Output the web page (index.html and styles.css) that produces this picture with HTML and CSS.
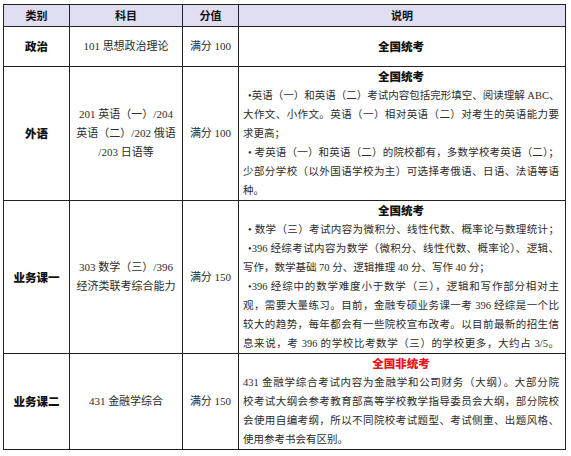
FILE: index.html
```html
<!DOCTYPE html>
<html lang="zh-CN">
<head>
<meta charset="utf-8">
<title>考试科目</title>
<link rel="stylesheet" href="styles.css">
</head>
<body>
<div class="page">
<table class="exam">
  <colgroup>
    <col class="c-cat"><col class="c-subj"><col class="c-score"><col class="c-desc">
  </colgroup>
  <thead>
    <tr><th>类别</th><th>科目</th><th>分值</th><th>说明</th></tr>
  </thead>
  <tbody>
    <tr class="r1">
      <td class="cat">政治</td>
      <td class="mid">101 思想政治理论</td>
      <td class="mid">满分 100</td>
      <td class="desc mid-v"><div class="title">全国统考</div></td>
    </tr>
    <tr>
      <td class="cat">外语</td>
      <td class="mid">201 英语（一）/204<br>英语（二）/202 俄语<br>/203 日语等</td>
      <td class="mid">满分 100</td>
      <td class="desc">
        <div class="title">全国统考</div>
        <span class="ln fl bl">•英语（一）和英语（二）考试内容包括完形填空、阅读理解 ABC、</span>
        <span class="ln fl">大作文、小作文。英语（一）相对英语（二）对考生的英语能力要</span>
        <span class="ln">求更高；</span>
        <span class="ln fl bl">• 考英语（一）和英语（二）的院校都有，多数学校考英语（二）；</span>
        <span class="ln fl">少部分学校（以外国语学校为主）可选择考俄语、日语、法语等语</span>
        <span class="ln">种。</span>
      </td>
    </tr>
    <tr>
      <td class="cat">业务课一</td>
      <td class="mid">303 数学（三）/396<br>经济类联考综合能力</td>
      <td class="mid">满分 150</td>
      <td class="desc">
        <div class="title">全国统考</div>
        <span class="ln fl bl">• 数学（三）考试内容为微积分、线性代数、概率论与数理统计；</span>
        <span class="ln fl bl">•396 经综考试内容为数学（微积分、线性代数、概率论）、逻辑、</span>
        <span class="ln">写作，数学基础 70 分、逻辑推理 40 分、写作 40 分；</span>
        <span class="ln fl bl">•396 经综中的数学难度小于数学（三），逻辑和写作部分相对主</span>
        <span class="ln fl">观，需要大量练习。目前，金融专硕业务课一考 396 经综是一个比</span>
        <span class="ln fl">较大的趋势，每年都会有一些院校宣布改考。以目前最新的招生信</span>
        <span class="ln fl">息来说，考 396 的学校比考数学（三）的学校更多，大约占 3/5。</span>
      </td>
    </tr>
    <tr>
      <td class="cat">业务课二</td>
      <td class="mid">431 金融学综合</td>
      <td class="mid">满分 150</td>
      <td class="desc">
        <div class="title red">全国非统考</div>
        <span class="ln fl">431 金融学综合考试内容为金融学和公司财务（大纲）。大部分院</span>
        <span class="ln fl">校考试大纲会参考教育部高等学校教学指导委员会大纲，部分院校</span>
        <span class="ln fl">会使用自编考纲，所以不同院校考试题型、考试侧重、出题风格、</span>
        <span class="ln">使用参考书会有区别。</span>
      </td>
    </tr>
  </tbody>
</table>
</div>
</body>
</html>
```
FILE: styles.css
```css
html, body {
  margin: 0;
  background: #ffffff;
}
body {
  font-family: "Liberation Serif", "Noto Sans CJK SC", serif;
  font-size: 10.5px;
  color: #2b2b2b;
}
.page {
  padding: 4px 0 0 3px;
}
.exam {
  border-collapse: collapse;
  table-layout: fixed;
  width: 562px;
}
.c-cat { width: 66px; }
.c-subj { width: 113px; }
.c-score { width: 56px; }
.c-desc { width: 327px; }
.exam th,
.exam td {
  border: 1px solid #222;
  padding: 0;
  line-height: 19px;
}
.exam th {
  background: #dfdef2;
  height: 21px;
  line-height: 21px;
  font-family: "Noto Sans CJK SC", sans-serif;
  font-weight: 700;
  font-size: 11px;
  color: #111;
  text-align: center;
}
.r1 td {
  height: 39px;
}
.cat {
  text-align: center;
  font-family: "Noto Sans CJK SC", sans-serif;
  font-weight: 900;
  font-size: 11.5px;
  color: #111;
}
.mid {
  text-align: center;
  font-size: 11px;
}
.exam .desc {
  vertical-align: top;
  padding: 0 6px 0 4px;
}
.exam .desc.mid-v {
  vertical-align: middle;
}
.title {
  text-align: center;
  font-family: "Noto Sans CJK SC", sans-serif;
  font-weight: 900;
  font-size: 11.5px;
  color: #111;
}
.title.red {
  color: #e8141b;
}
.ln {
  display: block;
  white-space: nowrap;
  text-align: justify;
}
.ln.fl {
  text-align-last: justify;
}
.ln.bl {
  padding-left: 5px;
}
```
